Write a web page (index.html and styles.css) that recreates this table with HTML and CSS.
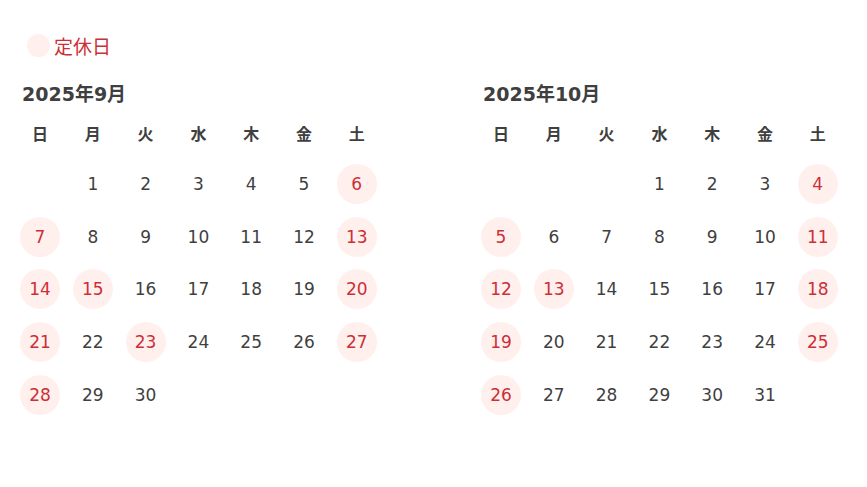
FILE: index.html
```html
<!DOCTYPE html>
<html lang="ja">

<head>
    <meta charset="UTF-8">
    <meta name="viewport" content="width=device-width, initial-scale=1.0">
    <title>営業カレンダー</title>
    <link rel="stylesheet" href="styles.css">
</head>

<body>
    <div class="legenda">
        <span class="legenda-marca"></span>
        <span class="legenda-texto">定休日</span>
    </div>

    <div class="calendarios">
        <div class="calendario">
            <h2>2025年9月</h2>
            <div class="grade">
                <div class="dia-semana">日</div>
                <div class="dia-semana">月</div>
                <div class="dia-semana">火</div>
                <div class="dia-semana">水</div>
                <div class="dia-semana">木</div>
                <div class="dia-semana">金</div>
                <div class="dia-semana">土</div>

                <div class="dia vazio"></div>
                <div class="dia">1</div>
                <div class="dia">2</div>
                <div class="dia">3</div>
                <div class="dia">4</div>
                <div class="dia">5</div>
                <div class="dia folga">6</div>

                <div class="dia folga">7</div>
                <div class="dia">8</div>
                <div class="dia">9</div>
                <div class="dia">10</div>
                <div class="dia">11</div>
                <div class="dia">12</div>
                <div class="dia folga">13</div>

                <div class="dia folga">14</div>
                <div class="dia folga">15</div>
                <div class="dia">16</div>
                <div class="dia">17</div>
                <div class="dia">18</div>
                <div class="dia">19</div>
                <div class="dia folga">20</div>

                <div class="dia folga">21</div>
                <div class="dia">22</div>
                <div class="dia folga">23</div>
                <div class="dia">24</div>
                <div class="dia">25</div>
                <div class="dia">26</div>
                <div class="dia folga">27</div>

                <div class="dia folga">28</div>
                <div class="dia">29</div>
                <div class="dia">30</div>
            </div>
        </div>

        <div class="calendario">
            <h2>2025年10月</h2>
            <div class="grade">
                <div class="dia-semana">日</div>
                <div class="dia-semana">月</div>
                <div class="dia-semana">火</div>
                <div class="dia-semana">水</div>
                <div class="dia-semana">木</div>
                <div class="dia-semana">金</div>
                <div class="dia-semana">土</div>

                <div class="dia vazio"></div>
                <div class="dia vazio"></div>
                <div class="dia vazio"></div>
                <div class="dia">1</div>
                <div class="dia">2</div>
                <div class="dia">3</div>
                <div class="dia folga">4</div>

                <div class="dia folga">5</div>
                <div class="dia">6</div>
                <div class="dia">7</div>
                <div class="dia">8</div>
                <div class="dia">9</div>
                <div class="dia">10</div>
                <div class="dia folga">11</div>

                <div class="dia folga">12</div>
                <div class="dia folga">13</div>
                <div class="dia">14</div>
                <div class="dia">15</div>
                <div class="dia">16</div>
                <div class="dia">17</div>
                <div class="dia folga">18</div>

                <div class="dia folga">19</div>
                <div class="dia">20</div>
                <div class="dia">21</div>
                <div class="dia">22</div>
                <div class="dia">23</div>
                <div class="dia">24</div>
                <div class="dia folga">25</div>

                <div class="dia folga">26</div>
                <div class="dia">27</div>
                <div class="dia">28</div>
                <div class="dia">29</div>
                <div class="dia">30</div>
                <div class="dia">31</div>
            </div>
        </div>
    </div>
</body>

</html>
```

FILE: styles.css
```css
body {
    font-family: 'DejaVu Sans', 'Noto Sans CJK JP', sans-serif;
    background-color: #fff;
    color: #3f3f3f;
    margin: 0;
    padding: 34px 20px 20px 20px;
}

.legenda {
    display: flex;
    align-items: center;
    gap: 4px;
    padding-left: 7px;
}

.legenda-marca {
    width: 23px;
    height: 23px;
    border-radius: 50%;
    background-color: #fff0ee;
}

.legenda-texto {
    font-family: 'Noto Sans CJK JP', sans-serif;
    font-size: 19px;
    line-height: 22px;
    color: #cc2f36;
}

.calendarios {
    display: flex;
    gap: 104px;
    margin-top: 25px;
}

.calendario {
    width: 357px;
}

.calendario h2 {
    font-size: 19px;
    font-weight: bold;
    margin: 0 0 15px 2px;
    line-height: 24px;
}

.grade {
    display: grid;
    grid-template-columns: repeat(7, 40px);
    column-gap: 12.8px;
    row-gap: 12.8px;
}

.dia-semana {
    font-family: 'Noto Sans CJK JP', sans-serif;
    font-size: 16px;
    font-weight: bold;
    text-align: center;
    height: 24px;
    line-height: 24px;
    margin-bottom: 6px;
}

.dia {
    width: 40px;
    height: 40px;
    line-height: 40px;
    text-align: center;
    font-size: 17px;
    border-radius: 50%;
}

.dia.folga {
    background-color: #fff0ee;
    color: #cc2f36;
}
```
